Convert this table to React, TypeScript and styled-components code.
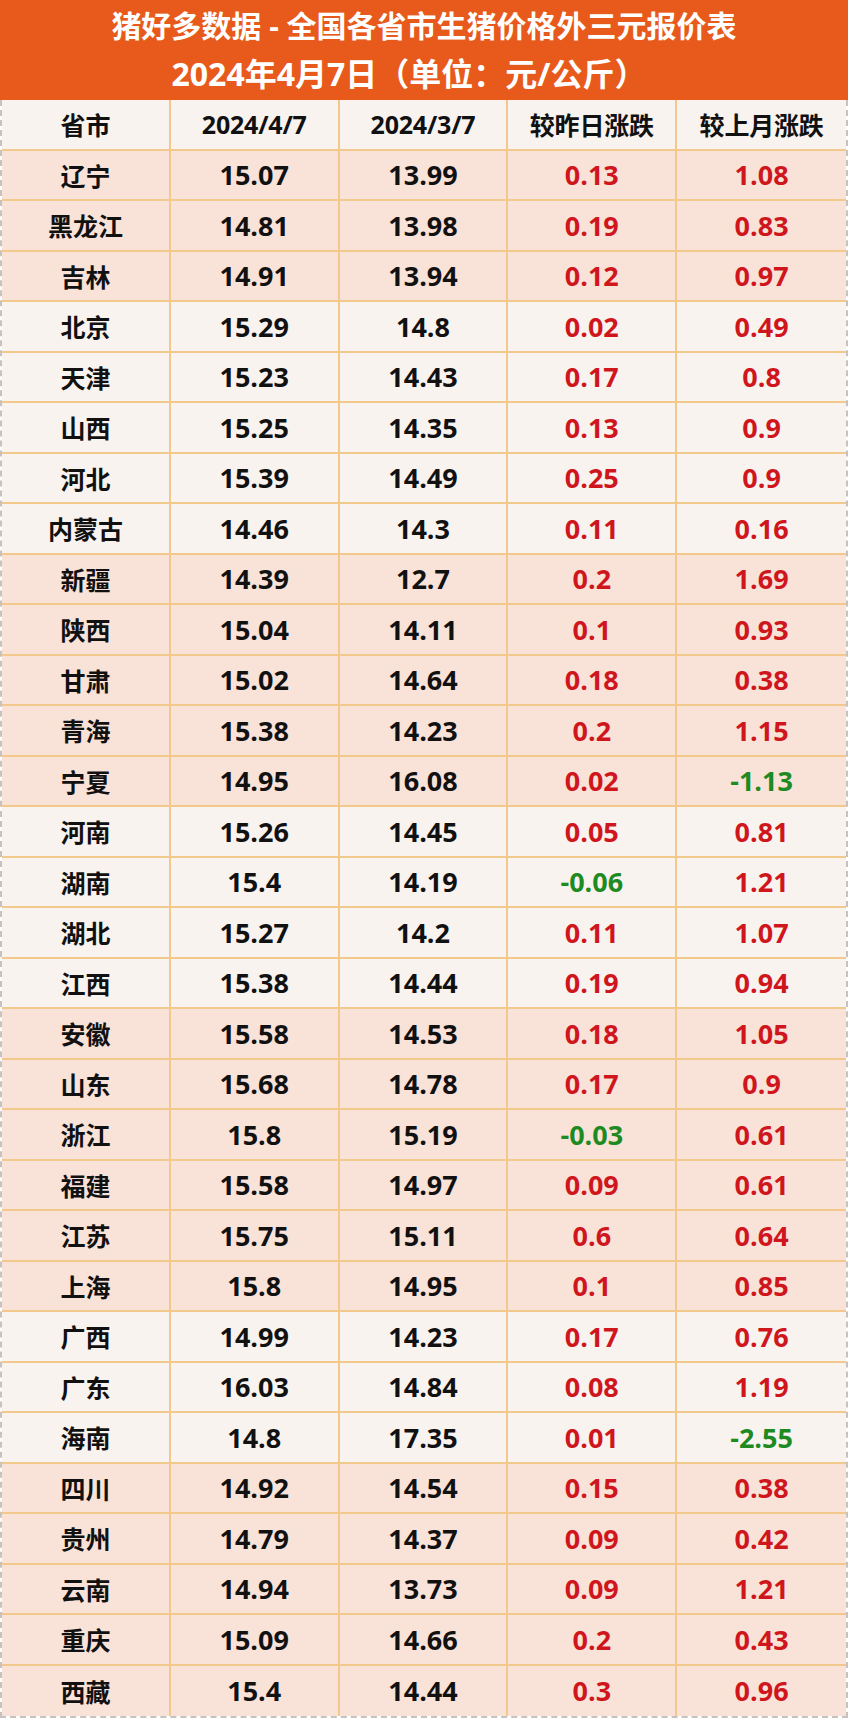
import React from "react";
import styled, { createGlobalStyle } from "styled-components";

const GlobalStyle = createGlobalStyle`
  html, body {
    margin: 0;
    padding: 0;
    background: #ffffff;
  }
  body {
    font-family: "Open Sans", "Noto Sans CJK SC", sans-serif;
  }
`;

type Row = {
  name: string;
  today: string;
  lastMonth: string;
  dayChange: string;
  monthChange: string;
};

// groups alternate pink / light background
const groups: Row[][] = [
  [
    { name: "辽宁", today: "15.07", lastMonth: "13.99", dayChange: "0.13", monthChange: "1.08" },
    { name: "黑龙江", today: "14.81", lastMonth: "13.98", dayChange: "0.19", monthChange: "0.83" },
    { name: "吉林", today: "14.91", lastMonth: "13.94", dayChange: "0.12", monthChange: "0.97" },
  ],
  [
    { name: "北京", today: "15.29", lastMonth: "14.8", dayChange: "0.02", monthChange: "0.49" },
    { name: "天津", today: "15.23", lastMonth: "14.43", dayChange: "0.17", monthChange: "0.8" },
    { name: "山西", today: "15.25", lastMonth: "14.35", dayChange: "0.13", monthChange: "0.9" },
    { name: "河北", today: "15.39", lastMonth: "14.49", dayChange: "0.25", monthChange: "0.9" },
    { name: "内蒙古", today: "14.46", lastMonth: "14.3", dayChange: "0.11", monthChange: "0.16" },
  ],
  [
    { name: "新疆", today: "14.39", lastMonth: "12.7", dayChange: "0.2", monthChange: "1.69" },
    { name: "陕西", today: "15.04", lastMonth: "14.11", dayChange: "0.1", monthChange: "0.93" },
    { name: "甘肃", today: "15.02", lastMonth: "14.64", dayChange: "0.18", monthChange: "0.38" },
    { name: "青海", today: "15.38", lastMonth: "14.23", dayChange: "0.2", monthChange: "1.15" },
    { name: "宁夏", today: "14.95", lastMonth: "16.08", dayChange: "0.02", monthChange: "-1.13" },
  ],
  [
    { name: "河南", today: "15.26", lastMonth: "14.45", dayChange: "0.05", monthChange: "0.81" },
    { name: "湖南", today: "15.4", lastMonth: "14.19", dayChange: "-0.06", monthChange: "1.21" },
    { name: "湖北", today: "15.27", lastMonth: "14.2", dayChange: "0.11", monthChange: "1.07" },
    { name: "江西", today: "15.38", lastMonth: "14.44", dayChange: "0.19", monthChange: "0.94" },
  ],
  [
    { name: "安徽", today: "15.58", lastMonth: "14.53", dayChange: "0.18", monthChange: "1.05" },
    { name: "山东", today: "15.68", lastMonth: "14.78", dayChange: "0.17", monthChange: "0.9" },
    { name: "浙江", today: "15.8", lastMonth: "15.19", dayChange: "-0.03", monthChange: "0.61" },
    { name: "福建", today: "15.58", lastMonth: "14.97", dayChange: "0.09", monthChange: "0.61" },
    { name: "江苏", today: "15.75", lastMonth: "15.11", dayChange: "0.6", monthChange: "0.64" },
    { name: "上海", today: "15.8", lastMonth: "14.95", dayChange: "0.1", monthChange: "0.85" },
  ],
  [
    { name: "广西", today: "14.99", lastMonth: "14.23", dayChange: "0.17", monthChange: "0.76" },
    { name: "广东", today: "16.03", lastMonth: "14.84", dayChange: "0.08", monthChange: "1.19" },
    { name: "海南", today: "14.8", lastMonth: "17.35", dayChange: "0.01", monthChange: "-2.55" },
  ],
  [
    { name: "四川", today: "14.92", lastMonth: "14.54", dayChange: "0.15", monthChange: "0.38" },
    { name: "贵州", today: "14.79", lastMonth: "14.37", dayChange: "0.09", monthChange: "0.42" },
    { name: "云南", today: "14.94", lastMonth: "13.73", dayChange: "0.09", monthChange: "1.21" },
    { name: "重庆", today: "15.09", lastMonth: "14.66", dayChange: "0.2", monthChange: "0.43" },
    { name: "西藏", today: "15.4", lastMonth: "14.44", dayChange: "0.3", monthChange: "0.96" },
  ],
];

const headers = ["省市", "2024/4/7", "2024/3/7", "较昨日涨跌", "较上月涨跌"];

const Page = styled.div`
  width: 848px;
  display: flex;
  flex-direction: column;
`;

const TitleBar = styled.div`
  height: 100px;
  box-sizing: border-box;
  background: #e85a1b;
  color: #ffffff;
  display: flex;
  flex-direction: column;
  align-items: center;
  justify-content: center;
  gap: 14px;
  font-family: "Open Sans", "Noto Sans CJK SC", sans-serif;
  font-weight: 700;
`;

const TitleLine = styled.div<{ $size: number; $shift?: number }>`
  font-size: ${(p) => p.$size}px;
  line-height: 1.1;
  margin-right: ${(p) => p.$shift ?? 0}px;
`;

const TableBox = styled.div`
  border: 2px dashed #c8c2bf;
  border-top: none;
  display: flex;
  flex-direction: column;
`;

const TableRow = styled.div<{ $tone: "pink" | "light" }>`
  display: grid;
  grid-template-columns: repeat(5, 1fr);
  height: 50.5px;
  box-sizing: border-box;
  border-bottom: 2px solid #f2c98b;
  background: ${(p) => (p.$tone === "pink" ? "#f9e2d8" : "#f9f3f0")};
  &:last-child {
    border-bottom: none;
  }
`;

const Cell = styled.div<{ $color?: string }>`
  display: flex;
  align-items: center;
  justify-content: center;
  border-right: 2px solid #f2c98b;
  font-size: 27px;
  font-weight: 700;
  color: ${(p) => p.$color ?? "#111111"};
  &:last-child {
    border-right: none;
  }
`;

const HeadCell = styled(Cell)`
  font-size: 25px;
  letter-spacing: -0.2px;
`;

const NameCell = styled(Cell)`
  font-family: "Noto Sans CJK SC", sans-serif;
  font-size: 25px;
`;

const changeColor = (v: string) => (v.startsWith("-") ? "#1e8a22" : "#d0161d");

export default function App() {
  return (
    <Page>
      <GlobalStyle />
      <TitleBar>
        <TitleLine $size={30}>猪好多数据 - 全国各省市生猪价格外三元报价表</TitleLine>
        <TitleLine $size={32} $shift={30}>
          2024年4月7日（单位：元/公斤）
        </TitleLine>
      </TitleBar>
      <TableBox>
        <TableRow $tone="light">
          {headers.map((h) => (
            <HeadCell key={h}>{h}</HeadCell>
          ))}
        </TableRow>
        {groups.map((group, gi) =>
          group.map((row) => (
            <TableRow key={row.name} $tone={gi % 2 === 0 ? "pink" : "light"}>
              <NameCell>{row.name}</NameCell>
              <Cell>{row.today}</Cell>
              <Cell>{row.lastMonth}</Cell>
              <Cell $color={changeColor(row.dayChange)}>{row.dayChange}</Cell>
              <Cell $color={changeColor(row.monthChange)}>{row.monthChange}</Cell>
            </TableRow>
          ))
        )}
      </TableBox>
    </Page>
  );
}
